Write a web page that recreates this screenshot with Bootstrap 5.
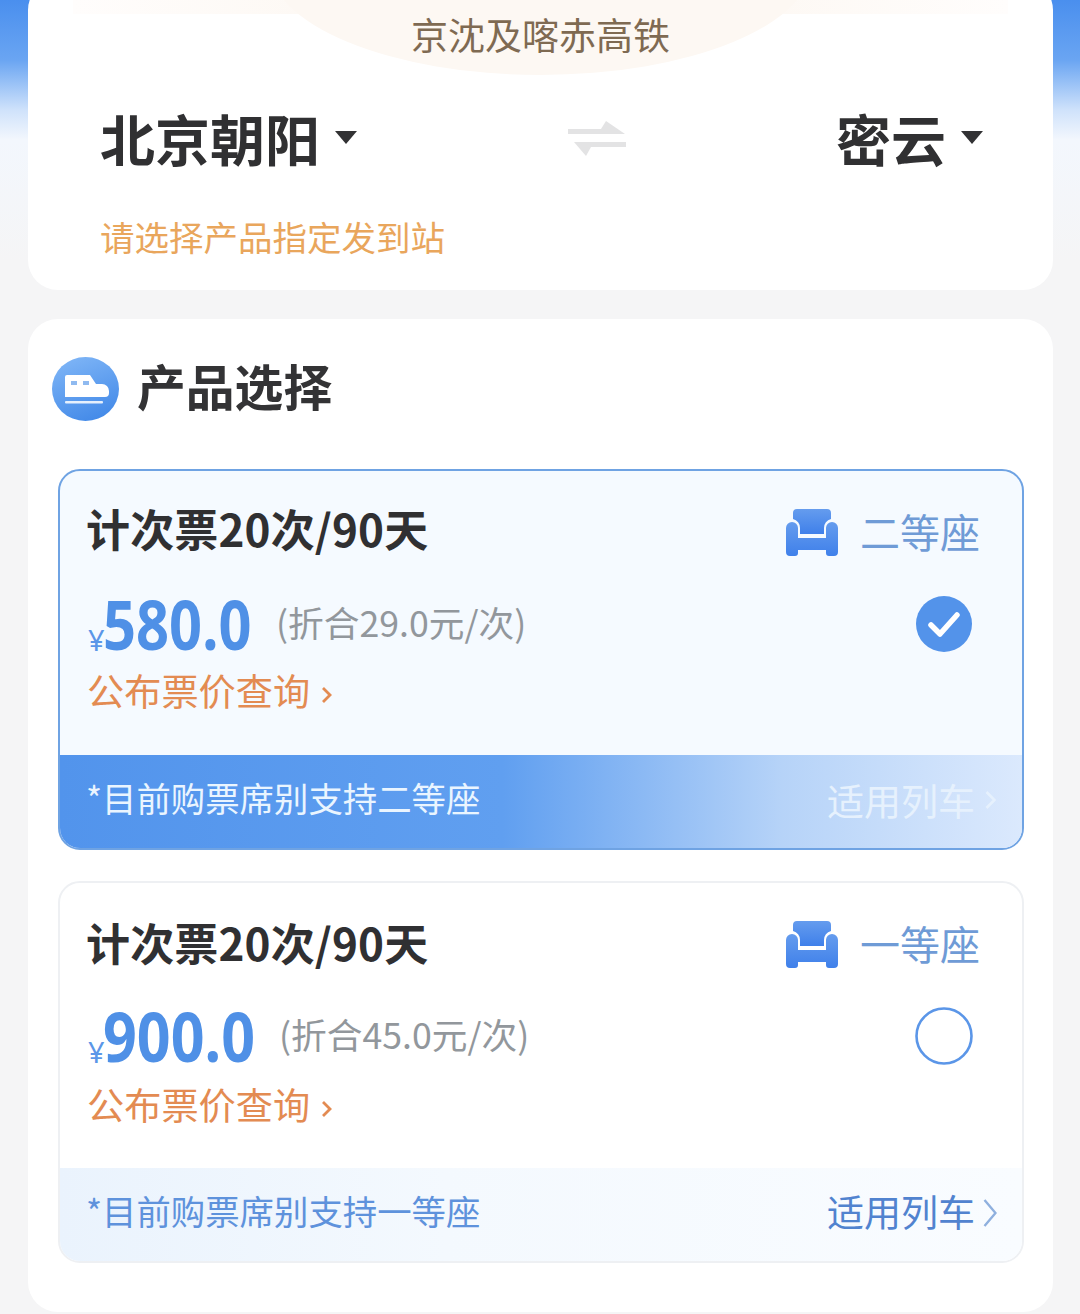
<!DOCTYPE html>
<html lang="zh-CN">
<head>
<meta charset="utf-8">
<title>产品选择</title>
<link href="https://cdn.jsdelivr.net/npm/bootstrap@5.3.0/dist/css/bootstrap.min.css" rel="stylesheet">
<style>
html,body{height:1314px;overflow:hidden}
body{font-family:"Noto Sans CJK SC","Liberation Sans",sans-serif;background:linear-gradient(180deg,#4a8fee 0,#6aa5f2 60px,#cfe2fb 110px,#f3f7fd 140px,#f5f5f6 260px);padding:0 27px 0 28px;color:#2f2f31}
.route-panel{margin-top:-20px;height:310px;border-radius:30px;background:#fff;overflow:hidden}
.line-glow{left:240px;top:-130px;width:545px;height:225px;border-radius:50%;background:#fdf8f3}
.line-glow-band{left:45px;right:45px;top:0;height:34px;background:linear-gradient(90deg,#fffdfc,#fdf8f3 30%,#fdf8f3 70%,#fffdfc)}
.line-name{padding-top:32px;font-size:37px;line-height:44px;color:#7f6a52;height:78px}
.route-row{margin-top:47px;height:70px;padding:0 70px 0 72px}
.station{font-size:55px;line-height:70px;font-weight:700;padding-bottom:6px;color:#303032}
.down-caret{width:0;height:0;border-left:11px solid transparent;border-right:11px solid transparent;border-top:13px solid #323234;margin-left:15px;margin-top:-5px}
.hint-text{margin:39px 0 0 72px;font-size:34.5px;line-height:44px;color:#e9a65c}
.product-panel{margin-top:29px;height:993px;border-radius:30px;padding:38px 29px 0 24px;background:#fff}
.train-badge{width:67px;height:64px}
.panel-title{font-size:48.8px;line-height:64px;font-weight:700;margin:-8px 0 0 18px;color:#333335}
.option-box{border:2px solid #eef0f3;border-radius:22px;height:382px;background:#fff;overflow:hidden;margin-left:6px}
.option-box.is-on{border-color:#6fa3e3;height:381px;background:#f5faff;margin-top:48px}
.option-box.is-off{margin-top:31px}
.option-body{padding:30px 42px 0 26px}
.ticket-name{font-size:44px;line-height:60px;font-weight:700;letter-spacing:.15px;margin-top:-6px;color:#303032}
.is-off .ticket-name{margin-top:-2px}
.seat-label{font-size:40px;line-height:60px;color:#6f9bd6;margin-left:22px}
.sofa-icon{margin-top:2px}
.price-row{margin-top:30px;height:70px}
.yen{font-size:29px;line-height:1;color:#5b96e8;align-self:flex-end;margin:0 0 7px 2px;font-family:"Noto Sans",sans-serif;width:15px}
.price-num{display:inline-block;width:150px;margin-top:-4px;white-space:nowrap;transform:scaleX(.85);transform-origin:left center;font-family:"Noto Sans","Liberation Sans",sans-serif;font-size:68px;line-height:70px;font-weight:700;color:#4f90e6}
.is-off .price-num{transform:scaleX(.87)}
.per-trip{font-size:35.7px;line-height:70px;color:#92979c;margin:-9px 0 0 23px}
.is-off .per-trip{margin-left:26px}
.radio-on,.radio-off{width:58px;height:58px;margin:-4px 7px 0 0}
.fare-link{margin:7px 0 0 1px;font-size:37.2px;line-height:44px;color:#e38b52}
.is-off .fare-link{margin-top:9px}
.chev{width:11px;height:20px;margin-left:10px;flex:none}
.fare-link .chev{margin-top:9px;margin-left:11px}
.note-band{height:93px;padding:0 26px 9px 26px;margin-top:43px}
.is-on .note-band{background:linear-gradient(90deg,#5294ec 0,#609ff0 46%,#b6d3f8 75%,#dbe9fd 100%);color:#eaf5ff}
.is-off .note-band{margin-top:42px;background:linear-gradient(90deg,#eaf3fd 0,#f4f9fe 40%,#f9fcff 100%);color:#5e92dc}
.note-text{font-size:34.4px;line-height:44px}
.fit-train{font-size:37px;line-height:44px;margin-top:6px}
.is-on .fit-train{color:#e6f1fd}
.is-off .fit-train{color:#5183cf;margin-top:2px}
.is-off .fit-train .chev{width:14px;height:30px;margin:4px -1px 0 8px}
</style>
</head>
<body>
<section class="card border-0 route-panel position-relative">
  <div class="position-absolute line-glow-band"></div>
  <div class="position-absolute line-glow"></div>
  <div class="line-name text-center position-relative">京沈及喀赤高铁</div>
  <div class="route-row d-flex justify-content-between align-items-center position-relative">
    <div class="d-flex align-items-center"><span class="station">北京朝阳</span><span class="down-caret"></span></div>
    <svg width="60" height="38" viewBox="0 0 60 38" fill="#e3e3e4"><path d="M1 8H34L39 0 58 13H1Z"/><path d="M7 21H59V26H24L19 35Z"/></svg>
    <div class="d-flex align-items-center"><span class="station">密云</span><span class="down-caret"></span></div>
  </div>
  <div class="hint-text">请选择产品指定发到站</div>
</section>

<section class="card border-0 product-panel">
  <div class="d-flex align-items-center">
    <svg class="train-badge" viewBox="0 0 67 64">
      <defs>
        <linearGradient id="bg" x1="0.3" y1="0" x2="0.7" y2="1"><stop offset="0" stop-color="#7db4f6"/><stop offset="1" stop-color="#4289e8"/></linearGradient>
        <linearGradient id="sofa" x1="0" y1="0" x2="0" y2="1"><stop offset="0" stop-color="#659cee"/><stop offset="1" stop-color="#3f80ea"/></linearGradient>
      </defs>
      <ellipse cx="33.5" cy="32" rx="33.5" ry="32" fill="url(#bg)"/>
      <path d="M13 20a2 2 0 0 1 2-2H38l6 9h6a7 7 0 0 1 7 7v2a4 4 0 0 1-4 4H13Z" fill="#fff"/>
      <rect x="19" y="24" width="6" height="4" fill="#8fbaf0"/><rect x="31" y="24" width="6" height="4" fill="#8fbaf0"/>
      <rect x="13" y="44" width="38" height="2.5" rx="1" fill="#fff" opacity=".85"/>
    </svg>
    <h2 class="panel-title">产品选择</h2>
  </div>

  <div class="option-box is-on">
    <div class="option-body">
      <div class="d-flex align-items-center">
        <span class="ticket-name">计次票20次/90天</span>
        <svg class="sofa-icon ms-auto" width="52" height="47" viewBox="0 0 52 47" fill="url(#sofa)"><path d="M11 0H41a4 4 0 0 1 4 4V10a9 9 0 0 0-7 9V25H14V19a9 9 0 0 0-7-9V4a4 4 0 0 1 4-4Z"/><path d="M0 19a6 6 0 0 1 12 0V29H40V19a6 6 0 0 1 12 0V43a4 4 0 0 1-4 4H43a3 3 0 0 1-3-3V41H12v3a3 3 0 0 1-3 3H4a4 4 0 0 1-4-4Z"/></svg>
        <span class="seat-label">二等座</span>
      </div>
      <div class="d-flex align-items-center price-row">
        <span class="yen">¥</span><span class="price-num">580.0</span><span class="per-trip">(折合29.0元/次)</span>
        <svg class="radio-on ms-auto" viewBox="0 0 58 58"><circle cx="29" cy="29" r="28" fill="#5393ea"/><path d="M16 30l9 9 17-19" fill="none" stroke="#fff" stroke-width="5.5" stroke-linecap="round" stroke-linejoin="round"/></svg>
      </div>
      <div class="fare-link d-flex align-items-center">公布票价查询<svg class="chev" viewBox="0 0 11 20" fill="none" stroke="#e38b52" stroke-width="2.8"><path d="M2 3l7 7-7 7"/></svg></div>
    </div>
    <div class="note-band d-flex align-items-center justify-content-between">
      <span class="note-text">*目前购票席别支持二等座</span>
      <span class="fit-train d-flex align-items-center">适用列车<svg class="chev" viewBox="0 0 11 20" fill="none" stroke="#e6f1fd" stroke-width="2.6"><path d="M1.5 2l8 8-8 8"/></svg></span>
    </div>
  </div>

  <div class="option-box is-off">
    <div class="option-body">
      <div class="d-flex align-items-center">
        <span class="ticket-name">计次票20次/90天</span>
        <svg class="sofa-icon ms-auto" width="52" height="47" viewBox="0 0 52 47" fill="url(#sofa)"><path d="M11 0H41a4 4 0 0 1 4 4V10a9 9 0 0 0-7 9V25H14V19a9 9 0 0 0-7-9V4a4 4 0 0 1 4-4Z"/><path d="M0 19a6 6 0 0 1 12 0V29H40V19a6 6 0 0 1 12 0V43a4 4 0 0 1-4 4H43a3 3 0 0 1-3-3V41H12v3a3 3 0 0 1-3 3H4a4 4 0 0 1-4-4Z"/></svg>
        <span class="seat-label">一等座</span>
      </div>
      <div class="d-flex align-items-center price-row">
        <span class="yen">¥</span><span class="price-num">900.0</span><span class="per-trip">(折合45.0元/次)</span>
        <svg class="radio-off ms-auto" viewBox="0 0 58 58"><circle cx="29" cy="29" r="27.5" fill="none" stroke="#5b96e8" stroke-width="2.6"/></svg>
      </div>
      <div class="fare-link d-flex align-items-center">公布票价查询<svg class="chev" viewBox="0 0 11 20" fill="none" stroke="#e38b52" stroke-width="2.8"><path d="M2 3l7 7-7 7"/></svg></div>
    </div>
    <div class="note-band d-flex align-items-center justify-content-between">
      <span class="note-text">*目前购票席别支持一等座</span>
      <span class="fit-train d-flex align-items-center">适用列车<svg class="chev" viewBox="0 0 14 30" fill="none" stroke="#8fb0de" stroke-width="2.4"><path d="M1.5 2l11 13-11 13"/></svg></span>
    </div>
  </div>
</section>
<script src="https://cdn.jsdelivr.net/npm/bootstrap@5.3.0/dist/js/bootstrap.bundle.min.js"></script>
</body>
</html>
